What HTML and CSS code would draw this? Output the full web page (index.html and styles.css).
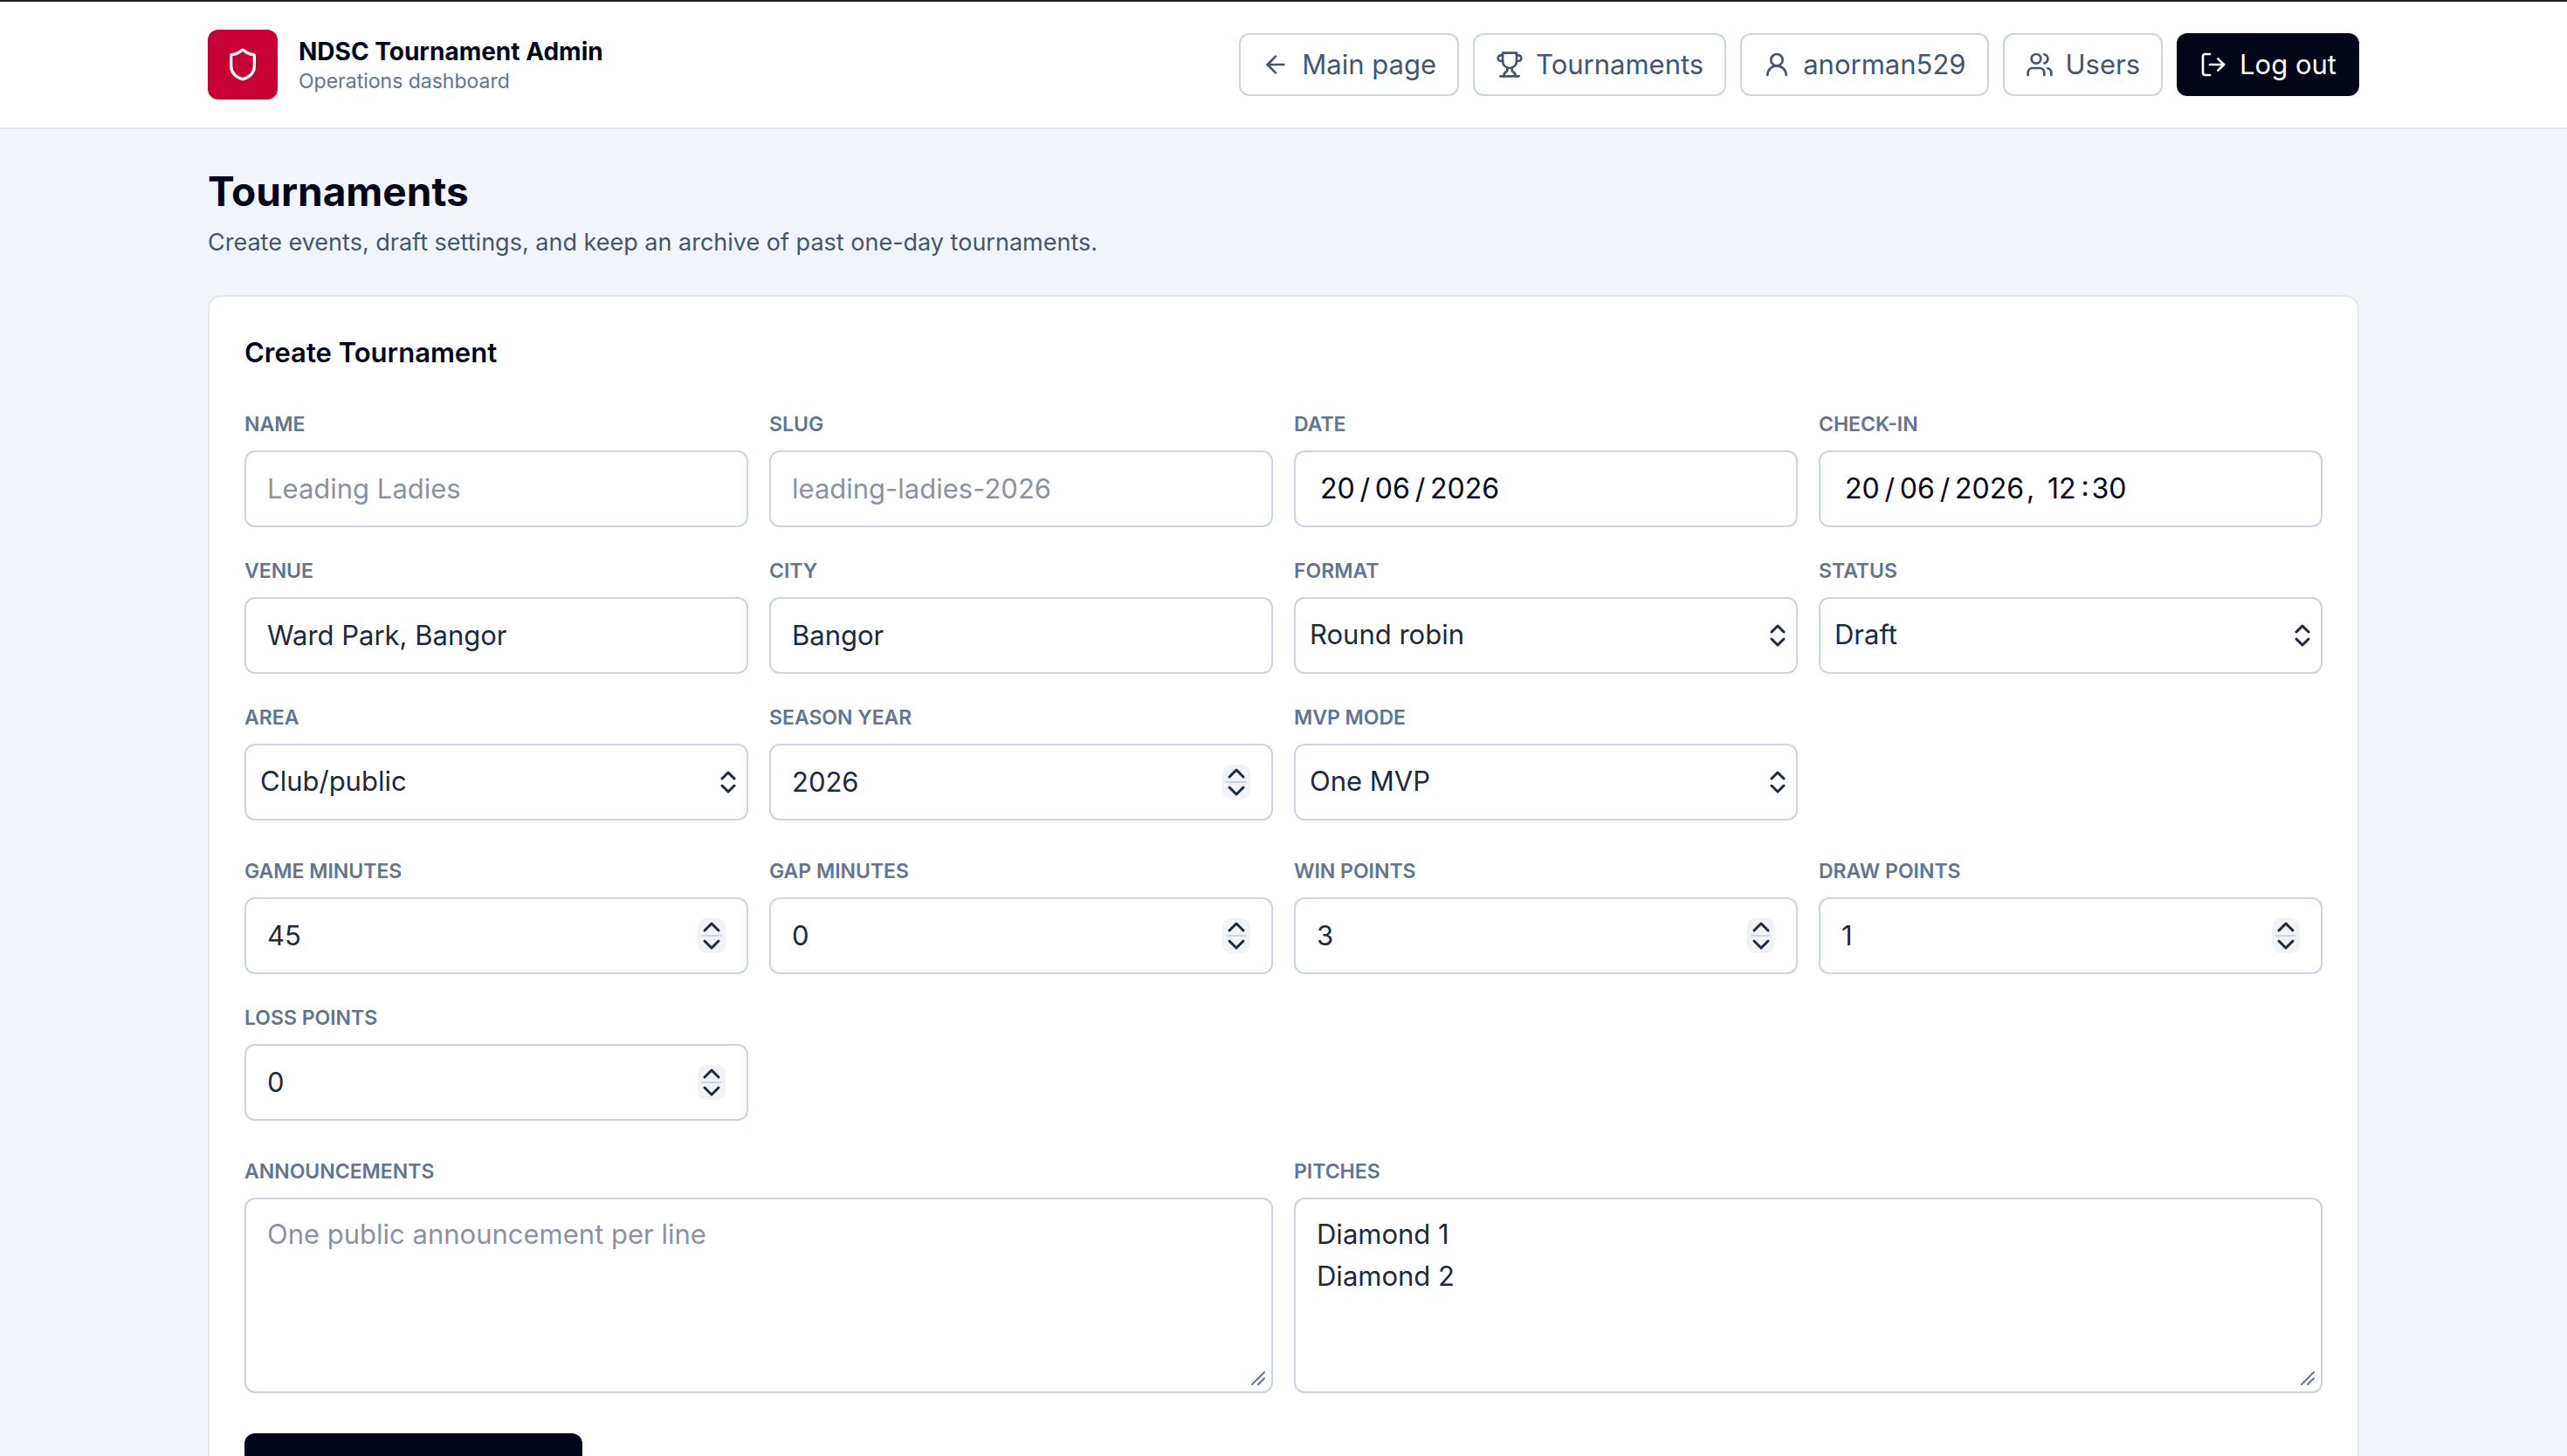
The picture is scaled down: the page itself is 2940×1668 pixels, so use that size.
FILE: index.html
```html
<!DOCTYPE html>
<html lang="en-GB">
  <head>
    <meta charset="UTF-8" />
    <meta name="viewport" content="width=device-width, initial-scale=1.0" />
    <title>NDSC Tournament Admin</title>
    <link rel="stylesheet" href="styles.css">
  </head>

  <body>
    <header class="topbar">
      <div class="container topbar-inner">
        <div class="brand">
          <span class="brand-logo">
            <svg class="icon icon-lg" viewBox="0 0 24 24"><path d="M20 13c0 5-3.5 7.5-7.66 8.95a1 1 0 0 1-.67-.01C7.5 20.5 4 18 4 13V6a1 1 0 0 1 1-1c2 0 4.5-1.2 6.24-2.72a1.17 1.17 0 0 1 1.52 0C14.51 3.81 17 5 19 5a1 1 0 0 1 1 1z" /></svg>
          </span>
          <div>
            <p class="brand-name">NDSC Tournament Admin</p>
            <p class="brand-sub">Operations dashboard</p>
          </div>
        </div>
        <nav class="nav">
          <a class="btn" href="#">
            <svg class="icon" viewBox="0 0 24 24"><path d="m12 19-7-7 7-7" /><path d="M19 12H5" /></svg>
            Main page
          </a>
          <a class="btn" href="#">
            <svg class="icon" viewBox="0 0 24 24">
              <path d="M6 9H4.5a2.5 2.5 0 0 1 0-5H6" />
              <path d="M18 9h1.5a2.5 2.5 0 0 0 0-5H18" />
              <path d="M4 22h16" />
              <path d="M10 14.66V17c0 .55-.47.98-.97 1.21C7.85 18.75 7 20.24 7 22" />
              <path d="M14 14.66V17c0 .55.47.98.97 1.21C16.15 18.75 17 20.24 17 22" />
              <path d="M18 2H6v7a6 6 0 0 0 12 0V2Z" />
            </svg>
            Tournaments
          </a>
          <a class="btn" href="#">
            <svg class="icon" viewBox="0 0 24 24"><circle cx="12" cy="8" r="5" /><path d="M20 21a8 8 0 0 0-16 0" /></svg>
            anorman529
          </a>
          <a class="btn" href="#">
            <svg class="icon" viewBox="0 0 24 24">
              <path d="M16 21v-2a4 4 0 0 0-4-4H6a4 4 0 0 0-4 4v2" />
              <circle cx="9" cy="7" r="4" />
              <path d="M22 21v-2a4 4 0 0 0-3-3.87" />
              <path d="M16 3.13a4 4 0 0 1 0 7.75" />
            </svg>
            Users
          </a>
          <button class="btn btn-dark" type="button">
            <svg class="icon" viewBox="0 0 24 24">
              <path d="M9 21H5a2 2 0 0 1-2-2V5a2 2 0 0 1 2-2h4" />
              <path d="m16 17 5-5-5-5" />
              <path d="M21 12H9" />
            </svg>
            Log out
          </button>
        </nav>
      </div>
    </header>

    <main class="container page">
      <h1>Tournaments</h1>
      <p class="lead">Create events, draft settings, and keep an archive of past one-day tournaments.</p>

      <form class="card">
        <h2>Create Tournament</h2>

        <div class="grid">
          <div class="field">
            <label for="name">Name</label>
            <input class="control" type="text" id="name" placeholder="Leading Ladies" />
          </div>
          <div class="field">
            <label for="slug">Slug</label>
            <input class="control" type="text" id="slug" placeholder="leading-ladies-2026" />
          </div>
          <div class="field">
            <label for="date">Date</label>
            <input class="control date" type="text" id="date" value="20&#8201;/&#8201;06&#8201;/&#8201;2026" />
          </div>
          <div class="field">
            <label for="checkin">Check-in</label>
            <input class="control date" type="text" id="checkin" value="20&#8201;/&#8201;06&#8201;/&#8201;2026&#8202;, &#8201;12&#8201;:&#8202;30" />
          </div>
          <div class="field">
            <label for="venue">Venue</label>
            <input class="control" type="text" id="venue" value="Ward Park, Bangor" />
          </div>
          <div class="field">
            <label for="city">City</label>
            <input class="control" type="text" id="city" value="Bangor" />
          </div>
          <div class="field">
            <label for="format">Format</label>
            <select class="control" id="format">
              <option>Round robin</option>
            </select>
          </div>
          <div class="field">
            <label for="status">Status</label>
            <select class="control" id="status">
              <option>Draft</option>
            </select>
          </div>
          <div class="field">
            <label for="area">Area</label>
            <select class="control" id="area">
              <option>Club/public</option>
            </select>
          </div>
          <div class="field">
            <label for="season">Season year</label>
            <input class="control" type="number" id="season" value="2026" />
          </div>
          <div class="field">
            <label for="mvp">MVP mode</label>
            <select class="control" id="mvp">
              <option>One MVP</option>
            </select>
          </div>
        </div>

        <div class="grid">
          <div class="field">
            <label for="game">Game minutes</label>
            <input class="control" type="number" id="game" value="45" />
          </div>
          <div class="field">
            <label for="gap">Gap minutes</label>
            <input class="control" type="number" id="gap" value="0" />
          </div>
          <div class="field">
            <label for="win">Win points</label>
            <input class="control" type="number" id="win" value="3" />
          </div>
          <div class="field">
            <label for="draw">Draw points</label>
            <input class="control" type="number" id="draw" value="1" />
          </div>
          <div class="field">
            <label for="loss">Loss points</label>
            <input class="control" type="number" id="loss" value="0" />
          </div>
        </div>

        <div class="grid grid-2">
          <div class="field">
            <label for="announcements">Announcements</label>
            <textarea class="control" id="announcements" placeholder="One public announcement per line"></textarea>
          </div>
          <div class="field">
            <label for="pitches">Pitches</label>
            <textarea class="control" id="pitches">Diamond 1
Diamond 2</textarea>
          </div>
        </div>

        <div class="actions">
          <button class="btn btn-dark btn-submit" type="submit">Create tournament</button>
        </div>
      </form>
    </main>
  </body>
</html>
```
FILE: styles.css
```css
* {
  margin: 0;
  padding: 0;
  box-sizing: border-box;
}

body {
  background: #f1f5f9;
  color: #1d293d;
  font-family: Inter, "Liberation Sans", sans-serif;
  font-size: 31px;
  line-height: 48px;
}

.container {
  max-width: 2560px;
  margin: 0 auto;
  padding: 0 48px;
}

/* header */
.topbar {
  background: #fff;
  border-top: 2px solid #1d1f2b;
  border-bottom: 2px solid #e2e8f0;
}

.topbar-inner {
  display: flex;
  align-items: center;
  justify-content: space-between;
  flex-wrap: wrap;
  gap: 24px;
  padding-top: 32px;
  padding-bottom: 32px;
}

.brand {
  display: flex;
  align-items: center;
  gap: 24px;
}

.brand-logo {
  display: flex;
  align-items: center;
  justify-content: center;
  width: 80px;
  height: 80px;
  border-radius: 12px;
  background: #c70036;
  color: #fff;
}

.brand-name {
  color: #020618;
  font-size: 28px;
  font-weight: 700;
  line-height: 38px;
}

.brand-sub {
  color: #62748e;
  font-size: 23px;
  line-height: 30px;
}

.nav {
  display: flex;
  flex-wrap: wrap;
  gap: 16px;
}

.icon {
  width: 32px;
  height: 32px;
  fill: none;
  stroke: currentColor;
  stroke-width: 2;
  stroke-linecap: round;
  stroke-linejoin: round;
}

.icon-lg {
  width: 40px;
  height: 40px;
}

.btn {
  display: inline-flex;
  align-items: center;
  justify-content: center;
  gap: 14px;
  height: 72px;
  padding: 0 24px;
  border: 2px solid #cad5e2;
  border-radius: 12px;
  background: #fff;
  color: #45556c;
  font: inherit;
  line-height: 32px;
  text-decoration: none;
  white-space: nowrap;
  cursor: pointer;
}

.btn-dark {
  border-color: #020618;
  background: #020618;
  color: #fff;
}

.btn-submit {
  height: 104px;
  padding: 0 54px;
}

/* page */
.page {
  padding-top: 40px;
  padding-bottom: 80px;
}

h1 {
  color: #020618;
  font-size: 46px;
  font-weight: 700;
  line-height: 62px;
}

.lead {
  margin-top: 8px;
  color: #45556c;
  font-size: 27px;
  line-height: 40px;
}

.card {
  display: flex;
  flex-direction: column;
  gap: 40px;
  margin-top: 40px;
  padding: 40px;
  border: 2px solid #e2e8f0;
  border-radius: 16px;
  background: #fff;
}

h2 {
  color: #020618;
  font-size: 31px;
  font-weight: 600;
}

.grid {
  display: grid;
  grid-template-columns: repeat(4, minmax(0, 1fr));
  gap: 32px 24px;
}

.grid-2 {
  grid-template-columns: repeat(2, minmax(0, 1fr));
}

.field {
  display: flex;
  flex-direction: column;
  gap: 12px;
}

label {
  color: #62748e;
  font-size: 23px;
  font-weight: 600;
  line-height: 36px;
  text-transform: uppercase;
}

.control {
  width: 100%;
  height: 88px;
  padding: 0 24px 2px;
  border: 2px solid #cad5e2;
  border-radius: 12px;
  background-color: #fff;
  background-repeat: no-repeat;
  color: #1d293d;
  font: inherit;
}

.control::placeholder {
  color: #8b92a1;
}

.date {
  padding-left: 28px;
  color: #020618;
  font-size: 32px;
}

select.control {
  padding: 0 48px 2px 16px;
  appearance: none;
  background-image: url("data:image/svg+xml,%3Csvg xmlns='http://www.w3.org/2000/svg' width='20' height='26' fill='none' stroke='%231d293d' stroke-width='3' stroke-linecap='round' stroke-linejoin='round'%3E%3Cpath d='M3 9l7-7 7 7M3 17l7 7 7-7'/%3E%3C/svg%3E");
  background-position: right 11px center;
}

input[type="number"] {
  appearance: textfield;
  background-image: url("data:image/svg+xml,%3Csvg xmlns='http://www.w3.org/2000/svg' width='32' height='40' fill='none' stroke-width='3' stroke-linecap='round' stroke-linejoin='round'%3E%3Crect width='32' height='40' rx='10' fill='%23f1f3f5'/%3E%3Cpath d='M5 20h22' stroke='%23cad5e2' stroke-width='2'/%3E%3Cpath d='M8 14l8-8 8 8M8 26l8 8 8-8' stroke='%231d293d'/%3E%3C/svg%3E");
  background-position: right 24px center;
}

input[type="number"]::-webkit-inner-spin-button {
  display: none;
}

textarea.control {
  display: block;
  height: 224px;
  padding: 16px 24px;
  resize: vertical;
  background-image: url("data:image/svg+xml,%3Csvg xmlns='http://www.w3.org/2000/svg' width='16' height='16' stroke='%2362748e' stroke-width='2' stroke-linecap='round'%3E%3Cpath d='M1 15L15 1M8 15l7-7'/%3E%3C/svg%3E");
  background-position: right 7px bottom 7px;
}

textarea.control::-webkit-resizer {
  display: none;
}

.actions {
  padding-top: 6px;
}

@media (max-width: 1400px) {
  .grid {
    grid-template-columns: repeat(2, minmax(0, 1fr));
  }
}
```
